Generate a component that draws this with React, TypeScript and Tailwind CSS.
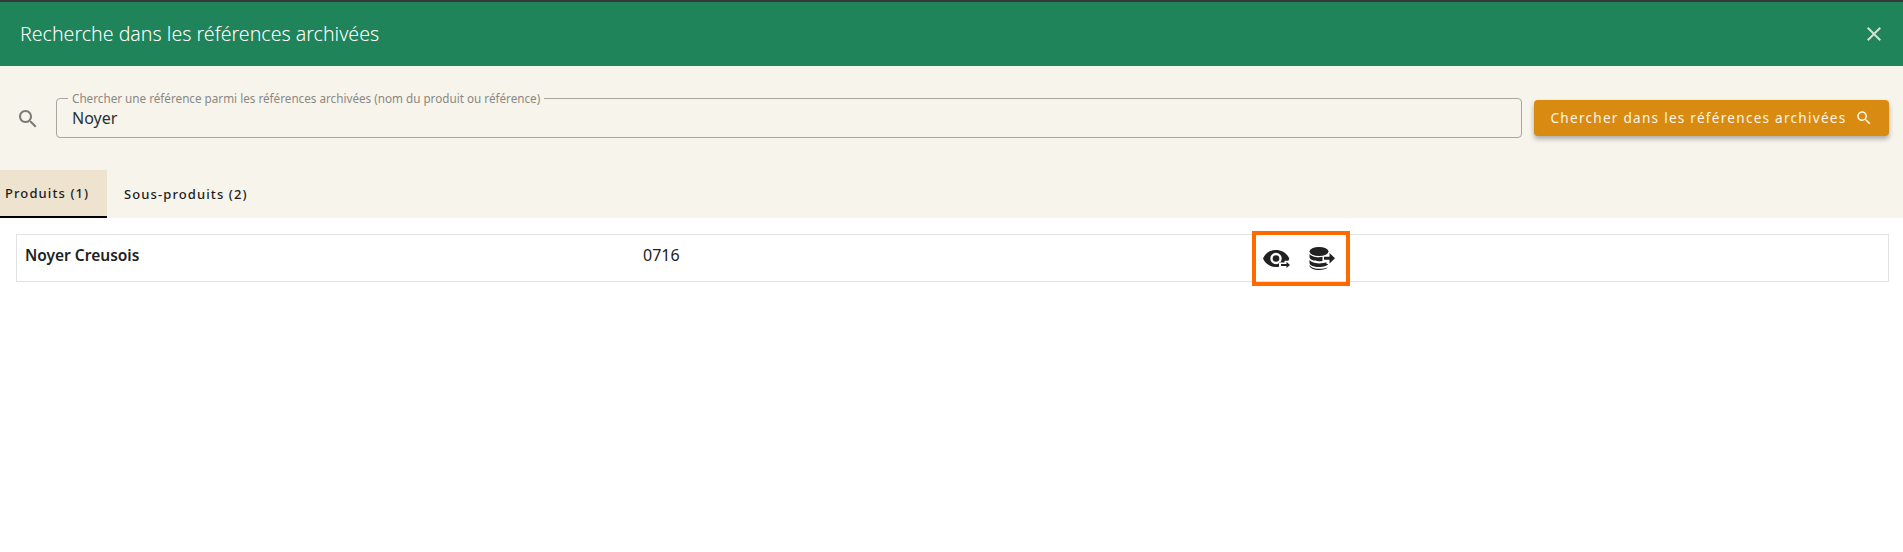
const EyeArrow = () => (
  <svg width="28" height="18" viewBox="0 0 28 18" fill="#212121" className="shrink-0">
    <path
      fillRule="evenodd"
      d="M13 0C7 0 2.200 3.400 0 8.500 2.200 13.600 7 17 13 17c1 0 2-.1 3-.3V12.500h5.500v-1.800l3.800 0c.4-.7.7-1.400 1-2.200C24 3.400 19 0 13 0zm0 2.800a5.700 5.700 0 1 1 0 11.400 5.700 5.700 0 0 1 0-11.400z"
    />
    <circle cx="13" cy="8.500" r="3.300" />
    <path d="M18 14h5.500v-2.200l3.500 3.200-3.500 3v-2h-5.500z" />
  </svg>
);

const DatabaseArrow = () => (
  <svg width="26" height="23" viewBox="0 0 26 23" fill="#212121" className="shrink-0">
    <ellipse cx="10" cy="4.500" rx="9.500" ry="4.500" />
    <path d="M.5 7v3c0 2.400 4.200 4.200 9.500 4.200 1.300 0 2.500-.1 3.500-.3V9.800c-1.100.2-2.300.4-3.500.4-4.700 0-8.300-1.300-9.500-3.200z" />
    <path d="M.5 12.800v3.200c0 2.400 4.200 4 9.500 4 4.500 0 8.200-1.200 9.200-3h-1.700v-1.800c-1.900.7-4.500 1.200-7.500 1.200-4.700 0-8.300-1.600-9.500-3.600z" />
    <path d="M.5 18v.500C.5 20.900 4.700 23 10 23c4 0 7.400-1.100 8.800-2.800-2.100 1-5.300 1.600-8.800 1.600-4.700 0-8.300-1.500-9.500-3.800z" />
    <path d="M15 9.800h5.500V6L26 11.300l-5.500 5.300v-3.800H15z" />
  </svg>
);

const MaterialSearch = ({ size, className }: { size: number; className: string }) => (
  <svg width={size} height={size} viewBox="0 0 24 24" fill="currentColor" className={className}>
    <path d="M15.500 14h-.79l-.28-.27C15.410 12.590 16 11.110 16 9.500 16 5.910 13.090 3 9.500 3S3 5.910 3 9.500 5.910 16 9.500 16c1.610 0 3.090-.59 4.230-1.570l.27.28v.79l5 4.990L20.490 19l-4.990-5zm-6 0C7.010 14 5 11.990 5 9.500S7.010 5 9.500 5 14 7.010 14 9.500 11.990 14 9.500 14z" />
  </svg>
);

export default function App() {
  return (
    <div className="h-[552px] w-full overflow-hidden bg-white font-['Noto_Sans','Open_Sans',sans-serif] text-[#212121]">
      <header className="flex h-[66px] items-center justify-between border-t-2 border-[#383838] bg-[#1f845a] pl-[20px] pr-[17px]">
        <h1 className="text-[19.6px] font-light text-white">Recherche dans les références archivées</h1>
        <button className="text-[#d5ded8]" aria-label="Fermer">
          <svg width="24" height="24" viewBox="0 0 24 24" fill="currentColor">
            <path d="M19 6.410 17.590 5 12 10.590 6.410 5 5 6.410 10.590 12 5 17.590 6.410 19 12 13.410 17.590 19 19 17.590 13.410 12z" />
          </svg>
        </button>
      </header>

      <div className="flex h-[104px] items-center bg-[#f7f4ec] pl-[16px] pr-[14px]">
        <MaterialSearch size={24} className="mt-[1px] shrink-0 text-[#7b7b78]" />
        <fieldset className="mb-[6px] ml-[16px] h-[46px] flex-1 rounded-[4px] border border-[#a8a59f] pl-[11px] leading-none">
          <legend className="px-[4px] text-[11.7px] leading-[12px] text-[#8a8883]">
            Chercher une référence parmi les références archivées (nom du produit ou référence)
          </legend>
          <div className="pl-[4px] pt-[3px] text-[16px] leading-[22px] text-[#263238]">Noyer</div>
        </fieldset>
        <button className="ml-[12px] flex h-[36px] w-[355px] items-center justify-center gap-[8px] rounded-[4px] bg-[#d98a10] text-[13.6px] tracking-[1.25px] text-[#fbf5e8] shadow-[0_3px_5px_rgba(0,0,0,0.3)]">
          Chercher dans les références archivées
          <MaterialSearch size={18} className="shrink-0" />
        </button>
      </div>

      <div className="flex h-[48px] bg-[#f7f4ec] pt-[2px] text-[13px] font-medium tracking-[1.1px] text-[#1d1d1d]">
        <div className="-mt-[2px] flex w-[107px] items-center border-b-2 border-black bg-[#ede3cf] pl-[5px] pt-[2px]">Produits (1)</div>
        <div className="flex items-center pl-[17px]">Sous-produits (2)</div>
      </div>

      <div className="relative ml-[16px] mr-[14px] mt-[16px] flex h-[48px] items-start border border-[#e2e2e2] pt-[9px] text-[15.5px] leading-[22px]">
        <div className="w-[626px] pl-[8px] font-semibold">Noyer Creusois</div>
        <div className="text-[16px]">0716</div>
        <div className="absolute left-[1235px] top-[-4px] flex h-[55px] w-[98px] items-center gap-[18px] border-[4px] border-[#ff6a00] pl-[7px]">
          <EyeArrow />
          <DatabaseArrow />
        </div>
      </div>
    </div>
  );
}
